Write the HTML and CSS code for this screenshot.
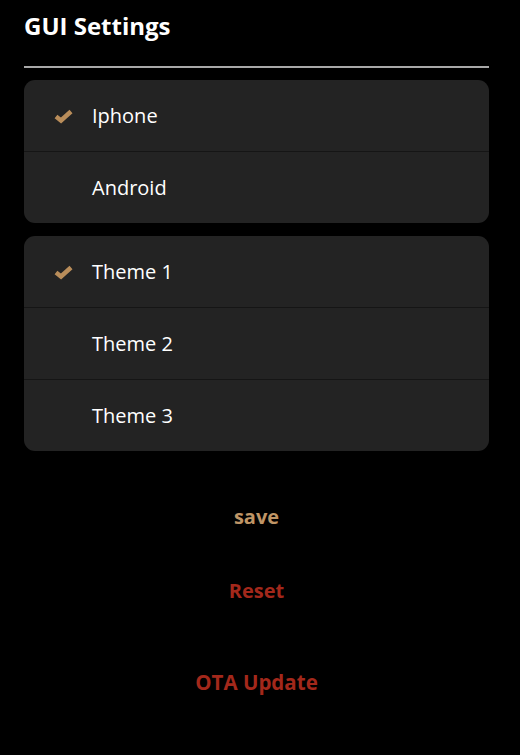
FILE: index.html
```html
<!DOCTYPE html>
<html>
<head>
<meta charset="utf-8">
<link rel="stylesheet" href="styles.css">
</head>
<body>
<div class="page">
  <h1 class="title">GUI Settings</h1>
  <div class="rule"></div>
  <div class="card">
    <div class="row"><span class="check"><svg width="22" height="18" viewBox="0 0 22 18"><path d="M4 9.5 L9 13.5 L19 4.5" fill="none" stroke="#b98d5a" stroke-width="4.5" stroke-linecap="butt" stroke-linejoin="miter"/></svg></span><span class="label">Iphone</span></div>
    <div class="row"><span class="check"></span><span class="label">Android</span></div>
  </div>
  <div class="card">
    <div class="row"><span class="check"><svg width="22" height="18" viewBox="0 0 22 18"><path d="M4 9.5 L9 13.5 L19 4.5" fill="none" stroke="#b98d5a" stroke-width="4.5" stroke-linecap="butt" stroke-linejoin="miter"/></svg></span><span class="label">Theme 1</span></div>
    <div class="row"><span class="check"></span><span class="label">Theme 2</span></div>
    <div class="row"><span class="check"></span><span class="label">Theme 3</span></div>
  </div>
  <div class="actions">
    <div class="btn save">save</div>
    <div class="btn reset">Reset</div>
    <div class="btn ota">OTA Update</div>
  </div>
</div>
</body>
</html>
```
FILE: styles.css
```css
html, body {
  margin: 0;
  padding: 0;
  background: #000;
  font-family: "Open Sans", "Noto Sans", sans-serif;
  color: #fff;
}
.page {
  padding: 0 31px 0 24px;
}
.title {
  margin: 0;
  font-size: 24px;
  font-weight: 700;
  line-height: 52px;
  letter-spacing: 0;
}
.rule {
  height: 2px;
  background: #a8a8a8;
  margin-top: 14px;
  margin-bottom: 12px;
}
.card {
  background: #232323;
  border-radius: 11px;
  margin-bottom: 13px;
  overflow: hidden;
}
.row {
  height: 71px;
  display: flex;
  align-items: center;
  border-top: 1px solid #151515;
}
.row:first-child {
  border-top: none;
}
.check {
  width: 40px;
  padding-left: 28px;
  display: flex;
  align-items: center;
}
.label {
  font-size: 20px;
  letter-spacing: 0;
}
.actions {
  display: flex;
  flex-direction: column;
  align-items: center;
}
.btn {
  font-weight: 700;
  font-size: 20px;
}
.save {
  color: #bf9566;
  margin-top: 27px;
  line-height: 52px;
}
.reset {
  color: #a3281b;
  margin-top: 35px;
  line-height: 26px;
}
.ota {
  color: #a3281b;
  font-size: 20.5px;
  margin-top: 64px;
  line-height: 28px;
}
```
